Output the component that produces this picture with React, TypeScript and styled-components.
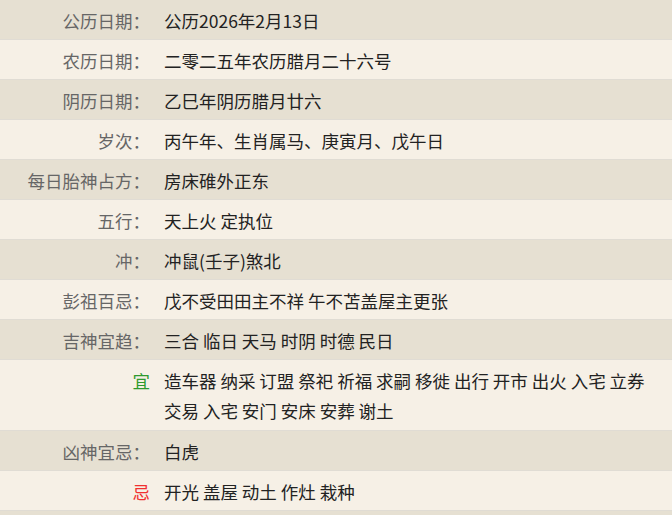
import React from 'react';
import styled, { createGlobalStyle } from 'styled-components';

const GlobalStyle = createGlobalStyle`
  body {
    margin: 0;
    background: #f6f0e6;
    font-family: "Noto Sans CJK SC", "Noto Sans", sans-serif;
  }
`;

const Table = styled.div`
  width: 672px;
  display: flex;
  flex-direction: column;
`;

const Row = styled.div<{ $dark: boolean; $tall?: boolean }>`
  display: flex;
  align-items: ${(p) => (p.$tall ? 'flex-start' : 'center')};
  box-sizing: border-box;
  min-height: ${(p) => (p.$tall ? 70 : 40)}px;
  padding: ${(p) => (p.$tall ? '6px 0 4px' : '2px 0 0')};
  background: ${(p) => (p.$dark ? '#e6e0d2' : '#f6f0e6')};
  border-bottom: 1px solid #e0dcd4;
  font-size: 17.5px;
  line-height: 30px;
`;

const Label = styled.div<{ $color?: string }>`
  flex: 0 0 150px;
  text-align: right;
  color: ${(p) => p.$color || '#666'};
`;

const Value = styled.div`
  flex: 1;
  padding-left: 14px;
  padding-right: 16px;
  color: #222;
  word-break: keep-all;
`;

type TRow = { label: string; value: string; color?: string; tall?: boolean };

const rows: TRow[] = [
  { label: '公历日期：', value: '公历2026年2月13日' },
  { label: '农历日期：', value: '二零二五年农历腊月二十六号' },
  { label: '阴历日期：', value: '乙巳年阴历腊月廿六' },
  { label: '岁次：', value: '丙午年、生肖属马、庚寅月、戊午日' },
  { label: '每日胎神占方：', value: '房床碓外正东' },
  { label: '五行：', value: '天上火 定执位' },
  { label: '冲：', value: '冲鼠(壬子)煞北' },
  { label: '彭祖百忌：', value: '戊不受田田主不祥 午不苫盖屋主更张' },
  { label: '吉神宜趋：', value: '三合 临日 天马 时阴 时德 民日' },
  {
    label: '宜',
    color: '#2e9a2e',
    tall: true,
    value: '造车器 纳采 订盟 祭祀 祈福 求嗣 移徙 出行 开市 出火 入宅 立券 交易 入宅 安门 安床 安葬 谢土',
  },
  { label: '凶神宜忌：', value: '白虎' },
  { label: '忌', color: '#f03030', value: '开光 盖屋 动土 作灶 栽种' },
  { label: '', value: '' },
];

const App = () => {
  return (
    <>
      <GlobalStyle />
      <Table>
        {rows.map((r, i) => (
          <Row key={i} $dark={i % 2 === 0} $tall={r.tall}>
            <Label $color={r.color}>{r.label}</Label>
            <Value>{r.value}</Value>
          </Row>
        ))}
      </Table>
    </>
  );
};

export default App;
